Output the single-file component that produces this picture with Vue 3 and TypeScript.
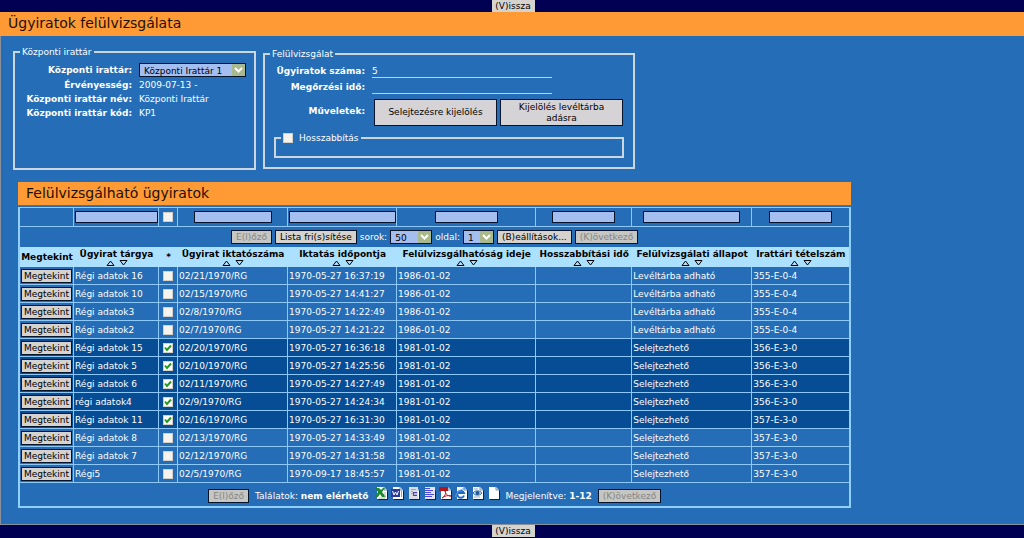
<script setup lang="ts">
import { reactive, ref } from 'vue'

interface Row {
  subject: string
  checked: boolean
  number: string
  filed: string
  reviewable: string
  extension: string
  state: string
  item: string
}

const make = (
  subject: string,
  checked: boolean,
  number: string,
  filed: string,
  reviewable: string,
  state: string,
  item: string,
): Row => ({ subject, checked, number, filed, reviewable, extension: '', state, item })

const rows = reactive<Row[]>([
  make('Régi adatok 16', false, '02/21/1970/RG', '1970-05-27 16:37:19', '1986-01-02', 'Levéltárba adható', '355-E-0-4'),
  make('Régi adatok 10', false, '02/15/1970/RG', '1970-05-27 14:41:27', '1986-01-02', 'Levéltárba adható', '355-E-0-4'),
  make('Régi adatok3', false, '02/8/1970/RG', '1970-05-27 14:22:49', '1986-01-02', 'Levéltárba adható', '355-E-0-4'),
  make('Régi adatok2', false, '02/7/1970/RG', '1970-05-27 14:21:22', '1986-01-02', 'Levéltárba adható', '355-E-0-4'),
  make('Régi adatok 15', true, '02/20/1970/RG', '1970-05-27 16:36:18', '1981-01-02', 'Selejtezhető', '356-E-3-0'),
  make('Régi adatok 5', true, '02/10/1970/RG', '1970-05-27 14:25:56', '1981-01-02', 'Selejtezhető', '356-E-3-0'),
  make('Régi adatok 6', true, '02/11/1970/RG', '1970-05-27 14:27:49', '1981-01-02', 'Selejtezhető', '356-E-3-0'),
  make('régi adatok4', true, '02/9/1970/RG', '1970-05-27 14:24:34', '1981-01-02', 'Selejtezhető', '356-E-3-0'),
  make('Régi adatok 11', true, '02/16/1970/RG', '1970-05-27 16:31:30', '1981-01-02', 'Selejtezhető', '357-E-3-0'),
  make('Régi adatok 8', false, '02/13/1970/RG', '1970-05-27 14:33:49', '1981-01-02', 'Selejtezhető', '357-E-3-0'),
  make('Régi adatok 7', false, '02/12/1970/RG', '1970-05-27 14:31:58', '1981-01-02', 'Selejtezhető', '357-E-3-0'),
  make('Régi5', false, '02/5/1970/RG', '1970-09-17 18:45:57', '1981-01-02', 'Selejtezhető', '357-E-3-0'),
])

const columns = [
  { key: 'subject', label: 'Ügyirat tárgya' },
  { key: 'mark', label: '*' },
  { key: 'number', label: 'Ügyirat iktatószáma' },
  { key: 'filed', label: 'Iktatás időpontja' },
  { key: 'reviewable', label: 'Felülvizsgálhatóság ideje' },
  { key: 'extension', label: 'Hosszabbítási idő' },
  { key: 'state', label: 'Felülvizsgálati állapot' },
  { key: 'item', label: 'Irattári tételszám' },
]

const exports = ['Excel', 'Word', 'RTF', 'Szöveg', 'PDF', 'HTML', 'XML', 'CSV']

const all = ref(false)
const extend = ref(false)
const count = ref('5')
const retention = ref('')
</script>

<template>
  <div class="page">
    <div class="bar"><button type="button" class="back">(V)issza</button></div>
    <h1 class="title">Ügyiratok felülvizsgálata</h1>

    <main class="body">
      <div class="panels">
        <fieldset class="box archive">
          <legend>Központi irattár</legend>
          <div class="fields">
            <label for="archive" class="name tall">Központi irattár:</label>
            <span class="select wide">
              <select id="archive"><option>Központi Irattár 1</option></select>
              <svg viewBox="0 0 13 12" aria-hidden="true"><rect width="13" height="12" rx="1" /><path d="M3 4l3.500 3.500L10 4" /></svg>
            </span>
            <span class="name">Érvényesség:</span><span>2009-07-13 -</span>
            <span class="name">Központi irattár név:</span><span>Központi Irattár</span>
            <span class="name">Központi irattár kód:</span><span>KP1</span>
          </div>
        </fieldset>

        <fieldset class="box review">
          <legend>Felülvizsgálat</legend>
          <div class="fields lines">
            <label for="count" class="name">Ügyiratok száma:</label>
            <input id="count" v-model="count" class="line" type="text" />
            <label for="retention" class="name">Megőrzési idő:</label>
            <input id="retention" v-model="retention" class="line" type="text" />
            <span class="name">Műveletek:</span>
            <div class="actions">
              <button type="button">Selejtezésre kijelölés</button>
              <button type="button">Kijelölés levéltárba adásra</button>
            </div>
          </div>
          <fieldset class="box extend">
            <legend><label><input v-model="extend" type="checkbox" class="tick" />Hosszabbítás</label></legend>
          </fieldset>
        </fieldset>
      </div>

      <section class="list">
        <h2 class="subtitle">Felülvizsgálható ügyiratok</h2>
        <table>
          <colgroup>
            <col class="c-view" /><col v-for="c in columns" :key="c.key" :class="'c-' + c.key" />
          </colgroup>
          <thead>
            <tr class="filters">
              <td></td>
              <td v-for="c in columns" :key="c.key">
                <input v-if="c.key === 'mark'" v-model="all" type="checkbox" class="tick" aria-label="Összes" />
                <input v-else type="text" :class="['filter', 'f-' + c.key]" :aria-label="c.label" />
              </td>
            </tr>
            <tr class="tools">
              <td :colspan="columns.length + 1">
                <div class="toolbar">
                  <button type="button" class="btn" disabled>E(l)őző</button>
                  <button type="button" class="btn">Lista fri(s)sítése</button>
                  <label for="size">sorok:</label>
                  <span class="select size">
                    <select id="size"><option>50</option></select>
                    <svg viewBox="0 0 13 12" aria-hidden="true"><rect width="13" height="12" rx="1" /><path d="M3 4l3.500 3.500L10 4" /></svg>
                  </span>
                  <label for="pageno">oldal:</label>
                  <span class="select pageno">
                    <select id="pageno"><option>1</option></select>
                    <svg viewBox="0 0 13 12" aria-hidden="true"><rect width="13" height="12" rx="1" /><path d="M3 4l3.500 3.500L10 4" /></svg>
                  </span>
                  <button type="button" class="btn">(B)eállítások...</button>
                  <button type="button" class="btn" disabled>(K)övetkező</button>
                </div>
              </td>
            </tr>
            <tr class="heads">
              <th scope="col">Megtekint</th>
              <th v-for="c in columns" :key="c.key" scope="col">
                {{ c.label }}
                <svg v-if="c.key !== 'mark'" class="sort" viewBox="0 0 22 6" aria-hidden="true">
                  <path d="M1 5.500L4.500 1L8 5.500zM14 .5h7L17.500 5z" />
                </svg>
              </th>
            </tr>
          </thead>
          <tbody>
            <tr v-for="r in rows" :key="r.number" :class="{ on: r.checked }">
              <td class="view"><button type="button" class="btn">Megtekint</button></td>
              <td>{{ r.subject }}</td>
              <td class="mark"><input v-model="r.checked" type="checkbox" class="tick" :aria-label="r.subject" /></td>
              <td>{{ r.number }}</td>
              <td>{{ r.filed }}</td>
              <td>{{ r.reviewable }}</td>
              <td>{{ r.extension }}</td>
              <td>{{ r.state }}</td>
              <td>{{ r.item }}</td>
            </tr>
          </tbody>
          <tfoot>
            <tr>
              <td :colspan="columns.length + 1">
                <div class="toolbar summary">
                  <button type="button" class="btn" disabled>E(l)őző</button>
                  <span>Találatok: <b>nem elérhető</b></span>
                  <span class="exports">
                    <button v-for="(e, i) in exports" :key="e" type="button" :aria-label="e">
                      <svg viewBox="0 0 13 13" aria-hidden="true">
                        <path d="M3 1h7l3 3v9H3z" fill="#10204a" />
                        <path d="M2 0h7l3 3v9H2z" fill="#fff" />
                        <path d="M9 0v3h3" fill="none" stroke="#7b8ba8" />
                        <g v-if="i === 0"><path d="M0 1h4l2 2 2-2h2L7 5l4 5H7L5 7l-2 3H0l3-5z" fill="#1c8a2c" /><path d="M10 5v6H4" fill="none" stroke="#a9bda9" /></g>
                        <g v-else-if="i === 1"><path d="M0 2h9v8H0z" fill="#293a9c" /><path d="M1.500 4l1.500 4L4.500 5 6 8l1.500-4" fill="none" stroke="#fff" /><path d="M10 5h1M10 7h1M10 9h1" stroke="#293a9c" /></g>
                        <g v-else-if="i === 2"><path d="M2 0h9v12H2z" fill="#dcdce6" /><path d="M4 2.500h5M4 4.500h2M4 6.500h2" stroke="#a2a2ba" /><path d="M6 5h4v4H6z" fill="#4646a0" /><path d="M7 6h3v2H7z" fill="#b9b9d8" /></g>
                        <g v-else-if="i === 3"><path d="M2 0h10v12H2z" fill="#e4e4f4" /><path d="M2 1.500h5M2 3.500h8M2 5.500h6M2 7.500h9M2 9.500h7" stroke="#4b49dc" /></g>
                        <g v-else-if="i === 4"><path d="M0 0h9v4H0z" fill="#b5161d" /><path d="M3 11C7 8 7 6 6 4c1 4 3 5 6 5-4-1-6 0-9 2z" fill="none" stroke="#c5161d" /></g>
                        <g v-else-if="i === 5"><path d="M9 8.500A3.500 3.500 0 1 1 9 6H3" fill="none" stroke="#1769ce" stroke-width="2" /><path d="M1 10C0 7 5 2 11 1" fill="none" stroke="#63a9ed" /></g>
                        <g v-else-if="i === 6"><path d="M2 6c2-3 7-3 9 0-2 3-7 3-9 0z" fill="#c4ddf0" stroke="#3979b6" /><circle cx="6.500" cy="6" r="2" fill="#235791" /><path d="M3 2h4M3 10h6" stroke="#8ca7ba" /></g>
                      </svg>
                    </button>
                  </span>
                  <span>Megjelenítve: <b>1-12</b></span>
                  <button type="button" class="btn" disabled>(K)övetkező</button>
                </div>
              </td>
            </tr>
          </tfoot>
        </table>
      </section>
    </main>

    <div class="bar"><button type="button" class="back">(V)issza</button></div>
  </div>
</template>

<style>
body {
  background: #000052;
}
</style>

<style scoped>
.page,
.page * {
  box-sizing: border-box;
}
.page {
  display: flex;
  flex-direction: column;
  min-height: 100vh;
  background: #256db7;
  color: #fff;
  font: 9px/14px Verdana, "DejaVu Sans", sans-serif;
}
button,
input,
select {
  font: inherit;
  margin: 0;
  padding: 0;
  border-radius: 0;
}
.bar {
  display: flex;
  justify-content: center;
  height: 12px;
  background: #000052;
}
.bar:last-child {
  height: 13px;
}
.back {
  width: 43px;
  height: 12px;
  margin-left: 2px;
  border: 1px solid #d6d3ce;
  background: #d6d3ce;
  color: #000;
  line-height: 10px;
}
.title,
.subtitle {
  margin: 0;
  background: #ff9a35;
  color: #1d1008;
  font-size: 14px;
  font-weight: normal;
}
.title {
  height: 24px;
  padding-left: 8px;
  line-height: 23px;
}
.body {
  flex: 1;
  padding: 10px 2px 15px 17px;
  border-left: 1px solid #8a8f98;
  border-bottom: 1px solid #8a8f98;
}
.panels {
  display: flex;
  align-items: flex-start;
  gap: 7px;
  margin-left: -5px;
}
.box {
  margin: 0;
  border: 2px solid #ccd6df;
  min-width: 0;
}
legend {
  padding: 0 2px;
  line-height: 12px;
}
.archive {
  width: 243px;
  min-height: 124px;
  padding: 4px 8px;
}
.archive legend,
.review legend {
  margin-left: -3px;
}
.review {
  width: 372px;
  margin-top: 2px;
  padding: 4px 9px 9px 8px;
}
.fields {
  display: grid;
  grid-template-columns: 109px 1fr;
  column-gap: 7px;
  align-items: center;
}
.name {
  font-weight: bold;
  text-align: right;
  white-space: nowrap;
}
.tall {
  line-height: 16px;
}
.lines {
  grid-template-columns: 92px 1fr;
  row-gap: 2px;
}
.line {
  width: 180px;
  height: 14px;
  border: 0;
  border-bottom: 1px solid #c6e07c;
  background: transparent;
  color: #fff;
}
.actions {
  display: flex;
  gap: 3px;
  padding: 3px 0 0 2px;
}
.actions button {
  width: 123px;
  height: 27px;
  padding: 0 8px;
  border: 1px solid #05142b;
  background: #d6d3d6;
  color: #000;
  line-height: 11px;
}
.extend {
  height: 26px;
  margin: 6px 0 0 1px;
  padding: 0 8px;
}
.extend label {
  display: flex;
  align-items: center;
  gap: 6px;
}
.select {
  position: relative;
  display: block;
  height: 14px;
}
.select select {
  display: block;
  width: 100%;
  height: 100%;
  padding-left: 4px;
  border: 1px solid #05142b;
  background: #a5bef0;
  color: #000;
  appearance: none;
}
.select svg {
  position: absolute;
  top: 1px;
  right: 1px;
  width: 13px;
  height: 12px;
  pointer-events: none;
  fill: #a9b98c;
}
.select svg path {
  fill: none;
  stroke: #fff;
  stroke-width: 2;
}
.wide {
  width: 107px;
}
.size {
  width: 42px;
}
.pageno {
  width: 31px;
}
.tick {
  flex: none;
  display: block;
  width: 10px;
  height: 10px;
  border: 1px solid #d4d0c8;
  background: #f5f3ee;
  appearance: none;
}
.tick:checked {
  background: #fff url("data:image/svg+xml,%3Csvg xmlns='http://www.w3.org/2000/svg' viewBox='0 0 8 8'%3E%3Cpath d='M1 3.500L3 6l4-4.500' fill='none' stroke='%231f9a1f' stroke-width='2'/%3E%3C/svg%3E");
}
.list {
  width: 83%;
  margin-top: 12px;
}
.subtitle {
  height: 24px;
  margin-bottom: 1px;
  padding-left: 8px;
  border-bottom: 1px solid #5c7078;
  line-height: 23px;
}
table {
  width: 100%;
  table-layout: fixed;
  border: 2px solid #8fd0ff;
  border-width: 1px 2px 2px;
  border-collapse: separate;
  border-spacing: 0;
}
.c-view { width: 54px; }
.c-subject { width: 85px; }
.c-mark { width: 19px; }
.c-number { width: 110px; }
.c-filed { width: 109px; }
.c-reviewable { width: 139px; }
.c-extension { width: 96px; }
.c-state { width: 120px; }
.c-item { width: 97px; }
td,
th {
  padding: 0;
  white-space: nowrap;
}
td {
  border-right: 1px solid #8cc8f8;
  border-bottom: 1px solid #8cc8f8;
}
td:last-child {
  border-right: 0;
}
.filters td {
  height: 19px;
}
.filter {
  display: block;
  height: 12px;
  margin: 0 auto;
  border: 1px solid #05142b;
  background: #a5bef0;
}
.f-subject { width: 83px; }
.f-number { width: 78px; }
.f-filed { width: 107px; }
.f-reviewable,
.f-extension,
.f-item { width: 63px; }
.f-state { width: 97px; }
.filters .tick,
.mark .tick {
  margin: 0 auto;
}
.tools td {
  height: 20px;
  border-bottom: 0;
}
.toolbar {
  display: flex;
  align-items: center;
  justify-content: center;
  gap: 3px;
}
.summary {
  gap: 6px;
}
.btn {
  height: 14px;
  padding: 0 3px;
  border: 1px solid #05142b;
  background: #d6d3ce;
  color: #000;
  line-height: 12px;
}
.toolbar .btn {
  padding: 0 4px;
}
.btn:disabled {
  background: #c6c6c2;
  color: #858585;
}
.heads th {
  height: 20px;
  background: #ace0ff;
  color: #000;
  line-height: 12px;
}
.sort {
  display: block;
  width: 22px;
  height: 6px;
  margin: 0 auto;
  fill: none;
  stroke: #000;
}
tbody td {
  height: 18px;
  padding-left: 1px;
}
tbody .view {
  padding: 0 1px;
}
.view .btn {
  display: block;
  width: 100%;
  padding: 0;
}
tbody .mark {
  padding: 0;
}
.on td {
  background: #064d96;
}
tfoot td {
  height: 23px;
  padding-top: 2px;
  border-bottom: 0;
}
.exports {
  display: flex;
  gap: 3px;
  padding-bottom: 5px;
}
.exports button {
  width: 13px;
  height: 13px;
  border: 0;
  background: none;
}
.exports svg {
  display: block;
  width: 13px;
  height: 13px;
}
</style>
